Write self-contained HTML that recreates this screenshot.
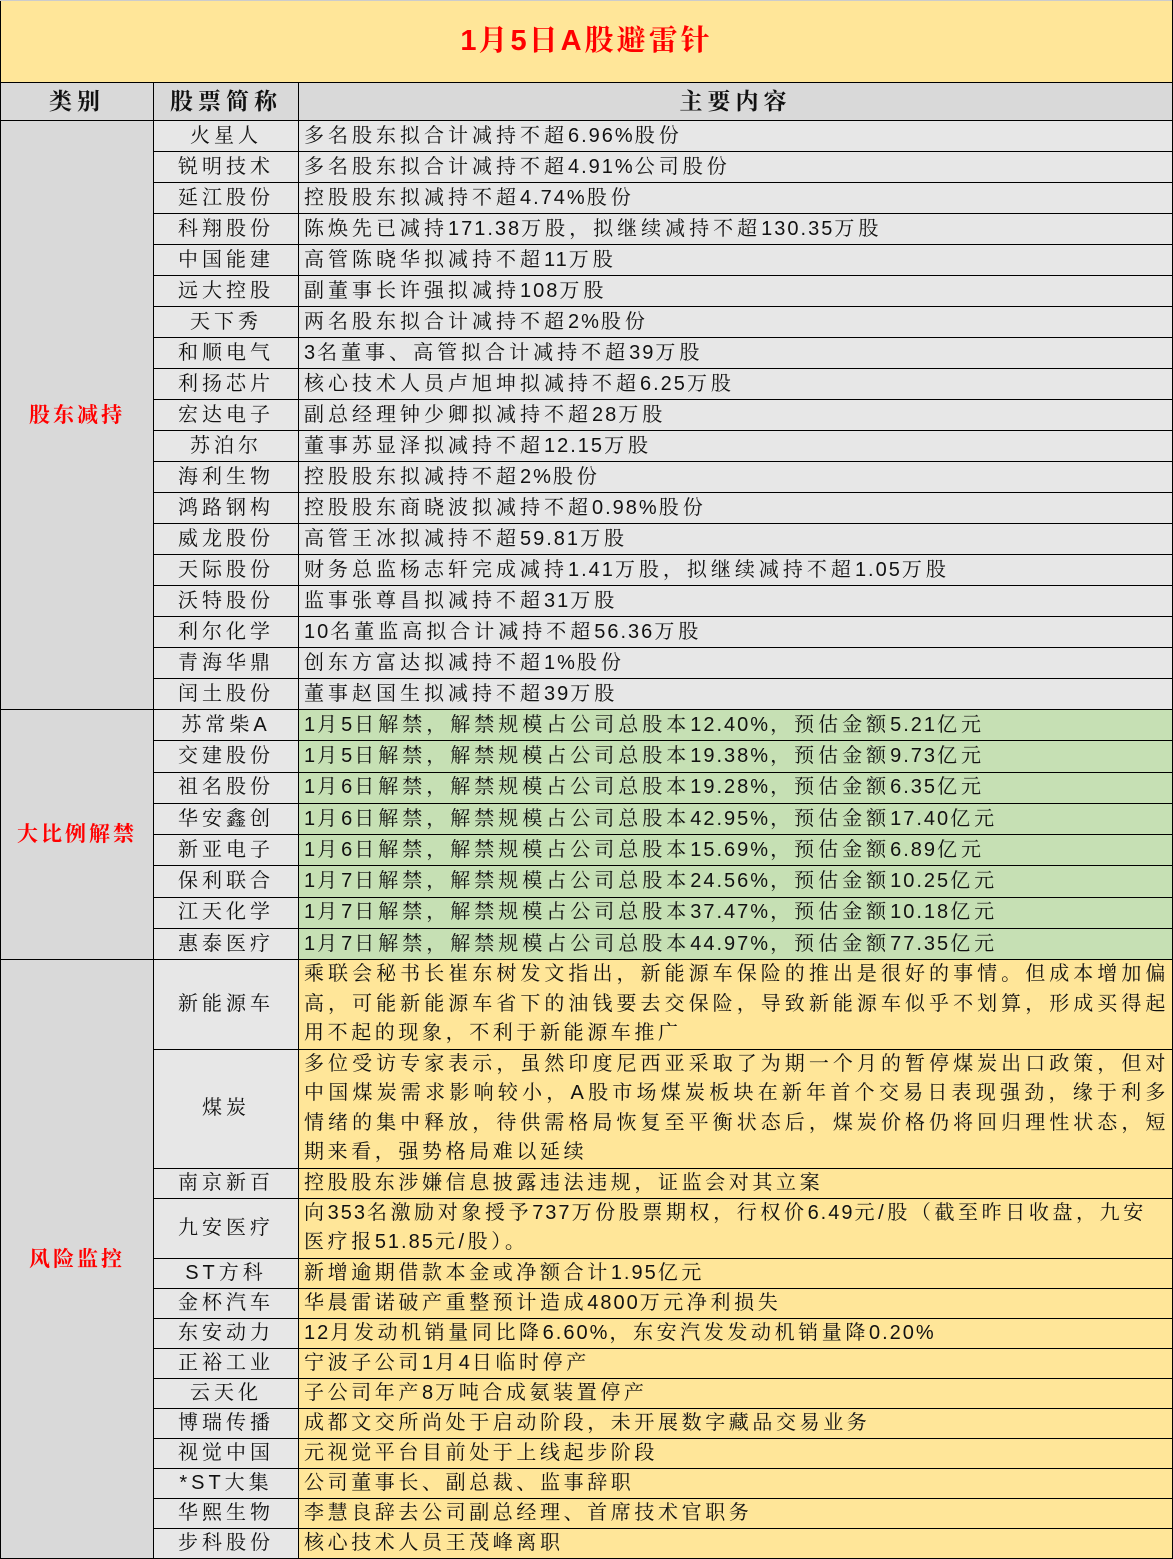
<!DOCTYPE html>
<html><head><meta charset="utf-8">
<style>
body{margin:0;width:1173px;height:1557px;background:#fff;font-family:"Liberation Sans","Noto Serif CJK SC","Noto Sans CJK SC",serif;overflow:hidden}
table{border-collapse:collapse;table-layout:fixed;width:1173px;position:absolute;left:0;top:0}
td{border:1.5px solid #000;padding:0;font-size:20px;letter-spacing:4px;color:#111;line-height:29px;overflow:hidden;white-space:nowrap}
.d{letter-spacing:2px}
.t{background:#FFE699;height:81px;text-align:center;color:#f00;font-weight:bold;font-size:29px;letter-spacing:3px;border-top:1px solid #ccc}
.h td{background:#D9D9D9;height:37px;text-align:center;font-weight:bold;font-size:23px;letter-spacing:5px}
.c{background:#D9D9D9;text-align:center;color:#f00;font-weight:bold;font-size:21px;letter-spacing:3px}
.n{background:#E7E7E7;text-align:center}
.g{background:#E7E7E7;padding-left:5px}
.gr{background:#C6E0B4;padding-left:5px}
.y{background:#FFE699;padding-left:5px;white-space:normal;text-align:justify;letter-spacing:3.6px;padding-right:3px}
.s1 td{height:30px}
.s2 td{height:30.3px}
.s3 td{height:29px;line-height:28px}
.ml{line-height:29.5px!important}
</style></head><body>
<table>
<colgroup><col style="width:153px"><col style="width:145px"><col></colgroup>
<tr><td class="t" colspan="3"><span class="d">1</span>月<span class="d">5</span>日A股避雷针</td></tr>
<tr class="h"><td>类别</td><td>股票简称</td><td>主要内容</td></tr>
<tr class="s1"><td class="c" rowspan="19">股东减持</td><td class="n">火星人</td><td class="g">多名股东拟合计减持不超<span class="d">6.96%</span>股份</td></tr>
<tr class="s1"><td class="n">锐明技术</td><td class="g">多名股东拟合计减持不超<span class="d">4.91%</span>公司股份</td></tr>
<tr class="s1"><td class="n">延江股份</td><td class="g">控股股东拟减持不超<span class="d">4.74%</span>股份</td></tr>
<tr class="s1"><td class="n">科翔股份</td><td class="g">陈焕先已减持<span class="d">171.38</span>万股，拟继续减持不超<span class="d">130.35</span>万股</td></tr>
<tr class="s1"><td class="n">中国能建</td><td class="g">高管陈晓华拟减持不超<span class="d">11</span>万股</td></tr>
<tr class="s1"><td class="n">远大控股</td><td class="g">副董事长许强拟减持<span class="d">108</span>万股</td></tr>
<tr class="s1"><td class="n">天下秀</td><td class="g">两名股东拟合计减持不超<span class="d">2%</span>股份</td></tr>
<tr class="s1"><td class="n">和顺电气</td><td class="g"><span class="d">3</span>名董事、高管拟合计减持不超<span class="d">39</span>万股</td></tr>
<tr class="s1"><td class="n">利扬芯片</td><td class="g">核心技术人员卢旭坤拟减持不超<span class="d">6.25</span>万股</td></tr>
<tr class="s1"><td class="n">宏达电子</td><td class="g">副总经理钟少卿拟减持不超<span class="d">28</span>万股</td></tr>
<tr class="s1"><td class="n">苏泊尔</td><td class="g">董事苏显泽拟减持不超<span class="d">12.15</span>万股</td></tr>
<tr class="s1"><td class="n">海利生物</td><td class="g">控股股东拟减持不超<span class="d">2%</span>股份</td></tr>
<tr class="s1"><td class="n">鸿路钢构</td><td class="g">控股股东商晓波拟减持不超<span class="d">0.98%</span>股份</td></tr>
<tr class="s1"><td class="n">威龙股份</td><td class="g">高管王冰拟减持不超<span class="d">59.81</span>万股</td></tr>
<tr class="s1"><td class="n">天际股份</td><td class="g">财务总监杨志轩完成减持<span class="d">1.41</span>万股，拟继续减持不超<span class="d">1.05</span>万股</td></tr>
<tr class="s1"><td class="n">沃特股份</td><td class="g">监事张尊昌拟减持不超<span class="d">31</span>万股</td></tr>
<tr class="s1"><td class="n">利尔化学</td><td class="g"><span class="d">10</span>名董监高拟合计减持不超<span class="d">56.36</span>万股</td></tr>
<tr class="s1"><td class="n">青海华鼎</td><td class="g">创东方富达拟减持不超<span class="d">1%</span>股份</td></tr>
<tr class="s1"><td class="n">闰土股份</td><td class="g">董事赵国生拟减持不超<span class="d">39</span>万股</td></tr>
<tr class="s2"><td class="c" rowspan="8">大比例解禁</td><td class="n">苏常柴A</td><td class="gr"><span class="d">1</span>月<span class="d">5</span>日解禁，解禁规模占公司总股本<span class="d">12.40%</span>，预估金额<span class="d">5.21</span>亿元</td></tr>
<tr class="s2"><td class="n">交建股份</td><td class="gr"><span class="d">1</span>月<span class="d">5</span>日解禁，解禁规模占公司总股本<span class="d">19.38%</span>，预估金额<span class="d">9.73</span>亿元</td></tr>
<tr class="s2"><td class="n">祖名股份</td><td class="gr"><span class="d">1</span>月<span class="d">6</span>日解禁，解禁规模占公司总股本<span class="d">19.28%</span>，预估金额<span class="d">6.35</span>亿元</td></tr>
<tr class="s2"><td class="n">华安鑫创</td><td class="gr"><span class="d">1</span>月<span class="d">6</span>日解禁，解禁规模占公司总股本<span class="d">42.95%</span>，预估金额<span class="d">17.40</span>亿元</td></tr>
<tr class="s2"><td class="n">新亚电子</td><td class="gr"><span class="d">1</span>月<span class="d">6</span>日解禁，解禁规模占公司总股本<span class="d">15.69%</span>，预估金额<span class="d">6.89</span>亿元</td></tr>
<tr class="s2"><td class="n">保利联合</td><td class="gr"><span class="d">1</span>月<span class="d">7</span>日解禁，解禁规模占公司总股本<span class="d">24.56%</span>，预估金额<span class="d">10.25</span>亿元</td></tr>
<tr class="s2"><td class="n">江天化学</td><td class="gr"><span class="d">1</span>月<span class="d">7</span>日解禁，解禁规模占公司总股本<span class="d">37.47%</span>，预估金额<span class="d">10.18</span>亿元</td></tr>
<tr class="s2"><td class="n">惠泰医疗</td><td class="gr"><span class="d">1</span>月<span class="d">7</span>日解禁，解禁规模占公司总股本<span class="d">44.97%</span>，预估金额<span class="d">77.35</span>亿元</td></tr>
<tr><td class="c" rowspan="14">风险监控</td><td class="n" style="height:88px">新能源车</td><td class="y ml">乘联会秘书长崔东树发文指出，新能源车保险的推出是很好的事情。但成本增加偏高，可能新能源车省下的油钱要去交保险，导致新能源车似乎不划算，形成买得起用不起的现象，不利于新能源车推广</td></tr>
<tr><td class="n" style="height:118px">煤炭</td><td class="y ml">多位受访专家表示，虽然印度尼西亚采取了为期一个月的暂停煤炭出口政策，但对中国煤炭需求影响较小，A股市场煤炭板块在新年首个交易日表现强劲，缘于利多情绪的集中释放，待供需格局恢复至平衡状态后，煤炭价格仍将回归理性状态，短期来看，强势格局难以延续</td></tr>
<tr class="s3"><td class="n">南京新百</td><td class="y">控股股东涉嫌信息披露违法违规，证监会对其立案</td></tr>
<tr><td class="n" style="height:58px">九安医疗</td><td class="y ml">向<span class="d">353</span>名激励对象授予<span class="d">737</span>万份股票期权，行权价<span class="d">6.49</span>元/股（截至昨日收盘，九安<br>医疗报<span class="d">51.85</span>元/股）。</td></tr>
<tr class="s3"><td class="n">ST方科</td><td class="y">新增逾期借款本金或净额合计<span class="d">1.95</span>亿元</td></tr>
<tr class="s3"><td class="n">金杯汽车</td><td class="y">华晨雷诺破产重整预计造成<span class="d">4800</span>万元净利损失</td></tr>
<tr class="s3"><td class="n">东安动力</td><td class="y"><span class="d">12</span>月发动机销量同比降<span class="d">6.60%</span>，东安汽发发动机销量降<span class="d">0.20%</span></td></tr>
<tr class="s3"><td class="n">正裕工业</td><td class="y">宁波子公司<span class="d">1</span>月<span class="d">4</span>日临时停产</td></tr>
<tr class="s3"><td class="n">云天化</td><td class="y">子公司年产<span class="d">8</span>万吨合成氨装置停产</td></tr>
<tr class="s3"><td class="n">博瑞传播</td><td class="y">成都文交所尚处于启动阶段，未开展数字藏品交易业务</td></tr>
<tr class="s3"><td class="n">视觉中国</td><td class="y">元视觉平台目前处于上线起步阶段</td></tr>
<tr class="s3"><td class="n">*ST大集</td><td class="y">公司董事长、副总裁、监事辞职</td></tr>
<tr class="s3"><td class="n">华熙生物</td><td class="y">李慧良辞去公司副总经理、首席技术官职务</td></tr>
<tr class="s3"><td class="n">步科股份</td><td class="y">核心技术人员王茂峰离职</td></tr>
</table>
</body></html>
